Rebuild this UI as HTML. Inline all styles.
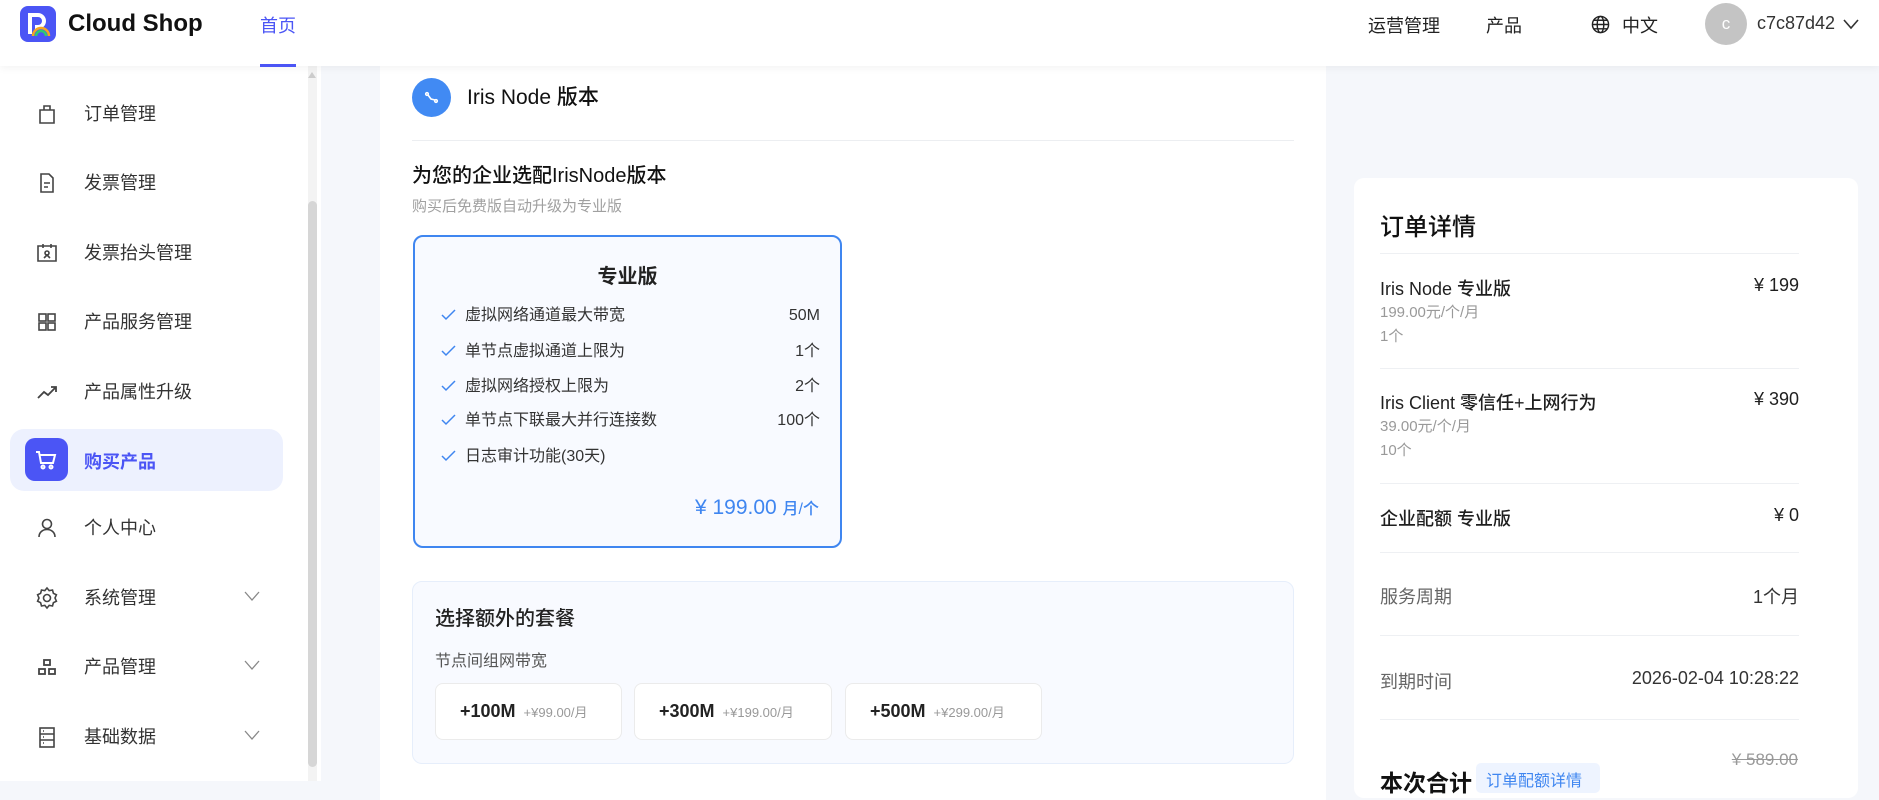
<!DOCTYPE html>
<html><head><meta charset="utf-8"><style>
*{margin:0;padding:0;box-sizing:border-box}
body{width:1879px;height:781px;overflow:hidden;position:relative;background:#f5f7fb;font-family:"Liberation Sans","Noto Sans CJK SC",sans-serif;color:#1f1f1f}
.a{position:absolute;white-space:nowrap}
.hdr{position:absolute;left:0;top:0;width:1879px;height:66px;background:#fff;box-shadow:0 2px 8px rgba(0,0,0,.05);z-index:3}
.side{position:absolute;left:0;top:66px;width:321px;height:715px;background:#fff}
.mi{position:absolute;left:0;width:300px;height:40px;font-size:18px;color:#333}
.mi .ic{position:absolute;left:35px;top:8px;width:24px;height:24px}
.mi .t{position:absolute;left:84px;top:8px;line-height:24px}
.mi .ch{position:absolute;left:244px;top:12px}
.row{position:absolute;left:441px;width:379px;font-size:16px;color:#333;height:22px;line-height:22px}
.row .v{position:absolute;right:0;top:0}
.row svg{position:absolute;left:0;top:4px}
.row .t{position:absolute;left:24px}
.btn{position:absolute;top:683px;height:57px;background:#fff;border:1.5px solid #ebebeb;border-radius:8px;font-size:18px;line-height:54px;color:#222;padding-left:24px;font-weight:700}
.btn small{font-size:13px;color:#999;margin-left:8px;font-weight:400}
.dv{position:absolute;left:1380px;width:419px;height:1px;background:#eef0f3}
.it{position:absolute;left:1380px;width:419px;font-size:18px;color:#1f1f1f}
.it .r{position:absolute;right:0;top:0}
.g{color:#999;font-size:15px;line-height:24px}
</style></head><body>
<div class="hdr">
  <svg class="a" style="left:20px;top:6px" width="36" height="36" viewBox="0 0 36 36"><rect width="36" height="36" rx="8" fill="#4b55f5"/><path d="M10 28V9h8a6 6 0 0 1 0 12h-3" stroke="#fff" stroke-width="4" fill="none"/><path d="M13 30a8 8 0 0 1 16 0" stroke="#f5a623" stroke-width="2.5" fill="none"/><path d="M16 30a5 5 0 0 1 10 0" stroke="#2ecc71" stroke-width="2.5" fill="none"/></svg>
  <div class="a" style="left:68px;top:10px;font-size:24px;font-weight:700;color:#111">Cloud Shop</div>
  <div class="a" style="left:260px;top:12px;font-size:18px;color:#4b55f5">首页</div>
  <div class="a" style="left:260px;top:64px;width:36px;height:3px;background:#4b55f5"></div>
  <div class="a" style="left:1368px;top:12px;font-size:18px;color:#222">运营管理</div>
  <div class="a" style="left:1486px;top:12px;font-size:18px;color:#222">产品</div>
  <svg class="a" style="left:1591px;top:15px" width="19" height="19" viewBox="0 0 20 20" fill="none" stroke="#222" stroke-width="1.5"><circle cx="10" cy="10" r="8.5"/><ellipse cx="10" cy="10" rx="3.5" ry="8.5"/><path d="M1.5 10h17M3 5.5h14M3 14.5h14"/></svg>
  <div class="a" style="left:1622px;top:12px;font-size:18px;color:#222">中文</div>
  <div class="a" style="left:1705px;top:3px;width:42px;height:42px;border-radius:50%;background:#c4c4c4;color:#fff;font-size:17px;text-align:center;line-height:42px">c</div>
  <div class="a" style="left:1757px;top:13px;font-size:18px;color:#333">c7c87d42</div>
  <svg class="a" style="left:1843px;top:18px" width="16" height="12" viewBox="0 0 16 12"><path d="M1 2l7 8 7-8" stroke="#333" stroke-width="1.6" fill="none"/></svg>
</div>

<div class="side">
  <div class="a" style="left:308px;top:0;width:9px;height:715px;background:#f3f3f3"></div>
  <div class="a" style="left:308px;top:135px;width:9px;height:566px;background:#d6d6d6;border-radius:5px"></div>
  <div class="a" style="left:308px;top:6px;width:0;height:0;border-left:4.5px solid transparent;border-right:4.5px solid transparent;border-bottom:6px solid #ccc"></div>
  <div class="a" style="left:10px;top:363px;width:273px;height:62px;background:#edf1fe;border-radius:14px"></div>
</div>

<div class="mi" style="top:94px"><svg class="ic" viewBox="0 0 24 24" fill="none" stroke="#444" stroke-width="1.6"><path d="M5 8h14v13H5zM9 8V4h6v4"/></svg><span class="t">订单管理</span></div>
<div class="mi" style="top:163px"><svg class="ic" viewBox="0 0 24 24" fill="none" stroke="#444" stroke-width="1.6"><path d="M6 3h8l4 4v14H6zM9 12h6M9 16h4"/></svg><span class="t">发票管理</span></div>
<div class="mi" style="top:233px"><svg class="ic" viewBox="0 0 24 24" fill="none" stroke="#444" stroke-width="1.6"><path d="M3 5h18v15H3zM8 3v4M16 3v4"/><circle cx="12" cy="12" r="2"/><path d="M9 17l3-3 3 3"/></svg><span class="t">发票抬头管理</span></div>
<div class="mi" style="top:302px"><svg class="ic" viewBox="0 0 24 24" fill="none" stroke="#444" stroke-width="1.6"><rect x="4" y="4" width="7" height="7"/><rect x="13" y="4" width="7" height="7"/><rect x="4" y="13" width="7" height="7"/><rect x="13" y="13" width="7" height="7"/></svg><span class="t">产品服务管理</span></div>
<div class="mi" style="top:372px"><svg class="ic" viewBox="0 0 24 24" fill="none" stroke="#444" stroke-width="1.8"><path d="M3 18l6-6 4 3 8-8M16 7h5v5"/></svg><span class="t">产品属性升级</span></div>
<div class="a" style="left:25px;top:438px;width:43px;height:43px;background:#4b55f5;border-radius:10px"></div>
<svg class="a" style="left:34px;top:448px" width="24" height="24" viewBox="0 0 24 24" fill="none" stroke="#fff" stroke-width="2"><path d="M2 4h3l2 11h12l2-8H6"/><circle cx="9" cy="19" r="1.5"/><circle cx="17" cy="19" r="1.5"/></svg>
<div class="a" style="left:84px;top:448px;font-size:18px;font-weight:700;color:#4b55f5">购买产品</div>
<div class="mi" style="top:508px"><svg class="ic" viewBox="0 0 24 24" fill="none" stroke="#444" stroke-width="1.6"><circle cx="12" cy="8" r="4.5"/><path d="M4 21c0-5 4-7.5 8-7.5s8 2.5 8 7.5"/></svg><span class="t">个人中心</span></div>
<div class="mi" style="top:578px"><svg class="ic" viewBox="0 0 24 24" fill="none" stroke="#444" stroke-width="1.6"><circle cx="12" cy="12" r="3.5"/><path d="M12 2l2.2 2.6 3.3-.6.9 3.3 3 1.5-1.4 3.2 1.4 3.2-3 1.5-.9 3.3-3.3-.6L12 22l-2.2-2.6-3.3.6-.9-3.3-3-1.5L4 12 2.6 8.8l3-1.5.9-3.3 3.3.6z"/></svg><span class="t">系统管理</span><svg class="ch" width="16" height="12" viewBox="0 0 16 12"><path d="M1 2l7 8 7-8" stroke="#888" stroke-width="1.3" fill="none"/></svg></div>
<div class="mi" style="top:647px"><svg class="ic" viewBox="0 0 24 24" fill="none" stroke="#444" stroke-width="1.8"><rect x="9" y="5" width="6" height="5"/><rect x="4" y="14" width="6" height="5"/><rect x="14" y="14" width="6" height="5"/></svg><span class="t">产品管理</span><svg class="ch" width="16" height="12" viewBox="0 0 16 12"><path d="M1 2l7 8 7-8" stroke="#888" stroke-width="1.3" fill="none"/></svg></div>
<div class="mi" style="top:717px"><svg class="ic" viewBox="0 0 24 24" fill="none" stroke="#444" stroke-width="1.6"><rect x="5" y="3" width="14" height="19"/><path d="M5 9h14M5 15h14M8 6h1M8 12h1M8 18h1"/></svg><span class="t">基础数据</span><svg class="ch" width="16" height="12" viewBox="0 0 16 12"><path d="M1 2l7 8 7-8" stroke="#888" stroke-width="1.3" fill="none"/></svg></div>

<div class="a" style="left:380px;top:40px;width:946px;height:760px;background:#fff"></div>
<div class="a" style="left:412px;top:78px;width:39px;height:39px;border-radius:50%;background:#418af3"></div>
<svg class="a" style="left:424px;top:90px" width="15" height="15" viewBox="0 0 15 15" fill="none" stroke="#fff" stroke-width="1.6"><circle cx="3" cy="4" r="1.3"/><circle cx="12" cy="11" r="1.3"/><path d="M4 5l3 4 4 1"/></svg>
<div class="a" style="left:467px;top:81px;font-size:21px;font-weight:500;color:#111">Iris Node 版本</div>
<div class="a" style="left:412px;top:140px;width:882px;height:1px;background:#eceef1"></div>
<div class="a" style="left:412px;top:159px;font-size:20px;font-weight:500;color:#111">为您的企业选配IrisNode版本</div>
<div class="a" style="left:412px;top:195px;font-size:15px;color:#a0a0a0">购买后免费版自动升级为专业版</div>

<div class="a" style="left:413px;top:235px;width:429px;height:313px;border:2px solid #3f86f0;border-radius:10px;background:#f8faff"></div>
<div class="a" style="left:413px;top:260px;width:429px;text-align:center;font-size:20px;font-weight:700;color:#222">专业版</div>
<div class="row" style="top:305px"><svg width="15" height="12" viewBox="0 0 15 12"><path d="M1 6l4 4 9-9" stroke="#3f86f0" stroke-width="1.5" fill="none"/></svg><span class="t">虚拟网络通道最大带宽</span><span class="v">50M</span></div>
<div class="row" style="top:341px"><svg width="15" height="12" viewBox="0 0 15 12"><path d="M1 6l4 4 9-9" stroke="#3f86f0" stroke-width="1.5" fill="none"/></svg><span class="t">单节点虚拟通道上限为</span><span class="v">1个</span></div>
<div class="row" style="top:376px"><svg width="15" height="12" viewBox="0 0 15 12"><path d="M1 6l4 4 9-9" stroke="#3f86f0" stroke-width="1.5" fill="none"/></svg><span class="t">虚拟网络授权上限为</span><span class="v">2个</span></div>
<div class="row" style="top:410px"><svg width="15" height="12" viewBox="0 0 15 12"><path d="M1 6l4 4 9-9" stroke="#3f86f0" stroke-width="1.5" fill="none"/></svg><span class="t">单节点下联最大并行连接数</span><span class="v">100个</span></div>
<div class="row" style="top:446px"><svg width="15" height="12" viewBox="0 0 15 12"><path d="M1 6l4 4 9-9" stroke="#3f86f0" stroke-width="1.5" fill="none"/></svg><span class="t">日志审计功能(30天)</span></div>
<div class="a" style="right:1060px;top:495px;color:#3f86f0;font-size:21px;font-weight:500">¥ 199.00 <span style="font-size:16px">月/个</span></div>

<div class="a" style="left:412px;top:581px;width:882px;height:183px;background:#f8faff;border:1px solid #e6eefb;border-radius:10px"></div>
<div class="a" style="left:435px;top:602px;font-size:20px;color:#222;font-weight:500">选择额外的套餐</div>
<div class="a" style="left:435px;top:647px;font-size:16px;color:#555">节点间组网带宽</div>
<div class="btn" style="left:435px;width:187px">+100M<small>+¥99.00/月</small></div>
<div class="btn" style="left:634px;width:198px">+300M<small>+¥199.00/月</small></div>
<div class="btn" style="left:845px;width:197px">+500M<small>+¥299.00/月</small></div>

<div class="a" style="left:1354px;top:178px;width:504px;height:620px;background:#fff;border-radius:10px"></div>
<div class="a" style="left:1380px;top:207px;font-size:24px;font-weight:500;color:#111">订单详情</div>
<div class="dv" style="top:253px"></div>
<div class="it" style="top:275px"><div style="font-weight:500">Iris Node 专业版</div><div class="g">199.00元/个/月</div><div class="g">1个</div><span class="r" style="font-weight:500">¥ 199</span></div>
<div class="dv" style="top:368px"></div>
<div class="it" style="top:389px"><div style="font-weight:500">Iris Client 零信任+上网行为</div><div class="g">39.00元/个/月</div><div class="g">10个</div><span class="r" style="font-weight:500">¥ 390</span></div>
<div class="dv" style="top:483px"></div>
<div class="it" style="top:505px;font-weight:500">企业配额 专业版<span class="r">¥ 0</span></div>
<div class="dv" style="top:552px"></div>
<div class="it" style="top:583px;color:#666">服务周期<span class="r" style="color:#333">1个月</span></div>
<div class="dv" style="top:635px"></div>
<div class="it" style="top:668px;color:#666">到期时间<span class="r" style="color:#333">2026-02-04 10:28:22</span></div>
<div class="dv" style="top:719px"></div>
<div class="a" style="right:81px;top:750px;font-size:17px;color:#999;text-decoration:line-through">¥ 589.00</div>
<div class="a" style="left:1380px;top:764px;font-size:23px;font-weight:700;color:#111">本次合计</div>
<div class="a" style="left:1476px;top:763px;width:124px;height:30px;background:#eef4ff;border-radius:5px;color:#3f86f0;font-size:16px;padding:4px 10px">订单配额详情</div>
</body></html>
